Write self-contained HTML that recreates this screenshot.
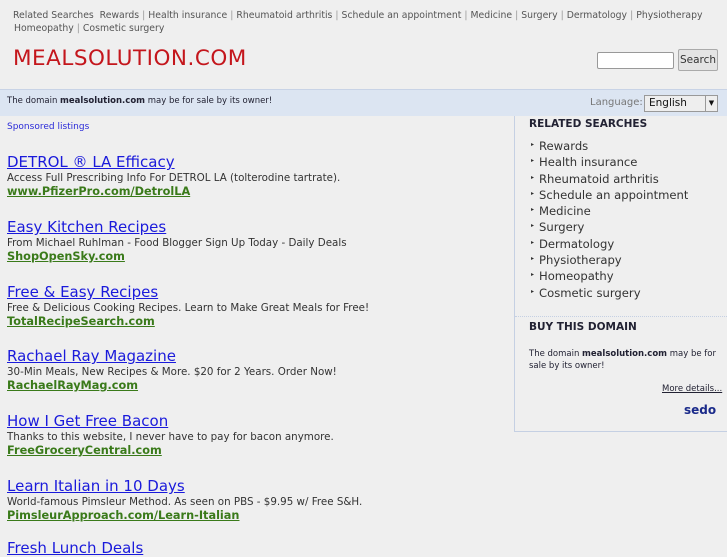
<!DOCTYPE html>
<html><head><meta charset="utf-8"><style>
*{margin:0;padding:0;box-sizing:border-box}
body{width:727px;height:545px;overflow:hidden;background:#efefef;font-family:"DejaVu Sans","Liberation Sans",sans-serif;position:relative}
.a{position:absolute;white-space:nowrap}
.top{font-size:9.3px;color:#555;left:13px}
.top span{color:#999;margin:0 3px}
.logo{left:13px;top:46px;font-size:21.5px;color:#c4161c;letter-spacing:0.5px}
.band{position:absolute;left:0;top:89px;width:727px;height:27px;background:#dce5f2;border-top:1px solid #c8d3e6}
.ad{position:absolute;left:7px;white-space:nowrap}
.ad .t{font-size:15px;color:#1a1adb;text-decoration:underline;line-height:18px}
.ad .d{font-size:10.3px;color:#333;line-height:14px}
.ad .u{font-size:11.3px;color:#3a7a1a;font-weight:bold;text-decoration:underline;line-height:14px}
.side{position:absolute;left:514px;top:116px;width:213px;height:316px;border:1px solid #c5d0e3;border-top:none;border-right:none}
.rs{font-size:11.6px;color:#333;left:531px}
.rs div{height:16.3px;line-height:16.3px;overflow:hidden}
.rs i{display:inline-block;width:8px;font-style:normal;font-size:6px;vertical-align:top;line-height:14px}
</style></head><body>
<div class="a top" style="top:10px">Related Searches&nbsp; Rewards<span>|</span>Health insurance<span>|</span>Rheumatoid arthritis<span>|</span>Schedule an appointment<span>|</span>Medicine<span>|</span>Surgery<span>|</span>Dermatology<span>|</span>Physiotherapy</div>
<div class="a top" style="top:23px;left:14px">Homeopathy<span>|</span>Cosmetic surgery</div>
<div class="a logo">MEALSOLUTION.COM</div>
<div class="a" style="left:597px;top:52px;width:77px;height:17px;background:#fff;border:1px solid #999;border-radius:2px"></div>
<div class="a" style="left:678px;top:49px;width:40px;height:22px;background:#e4e4e4;border:1px solid #aaa;border-radius:2px;font-size:10.5px;color:#333;text-align:center;line-height:20px;font-family:'DejaVu Sans',sans-serif">Search</div>
<div class="band"></div>
<div class="a" style="left:7px;top:96px;font-size:8.5px;color:#223">The domain <b>mealsolution.com</b> may be for sale by its owner!</div>
<div class="a" style="left:590px;top:97px;font-size:10px;color:#777">Language:</div>
<div class="a" style="left:644px;top:95px;width:74px;height:17px;background:#eee;border:1px solid #999;font-size:10.5px;color:#111;padding-left:4px;line-height:15px">English<span style="position:absolute;right:0;top:0;width:12px;height:15px;border-left:1px solid #999;font-size:7px;text-align:center">▼</span></div>
<div class="a" style="left:7px;top:122px;font-size:9px;color:#2a2ad8">Sponsored listings</div>
<div class="side"></div>
<div class="a" style="left:529px;top:118px;font-size:10.5px;font-weight:bold;color:#223">RELATED SEARCHES</div>
<div class="a rs" style="top:138px"><div><i>▸</i>Rewards</div><div><i>▸</i>Health insurance</div><div><i>▸</i>Rheumatoid arthritis</div><div><i>▸</i>Schedule an appointment</div><div><i>▸</i>Medicine</div><div><i>▸</i>Surgery</div><div><i>▸</i>Dermatology</div><div><i>▸</i>Physiotherapy</div><div><i>▸</i>Homeopathy</div><div><i>▸</i>Cosmetic surgery</div></div>
<div class="a" style="left:515px;top:316px;width:212px;border-top:1px dotted #c5d0e3"></div>
<div class="a" style="left:529px;top:321px;font-size:10.5px;font-weight:bold;color:#223">BUY THIS DOMAIN</div>
<div class="a" style="left:529px;top:348px;font-size:8.5px;color:#223;line-height:12px">The domain <b>mealsolution.com</b> may be for<br>sale by its owner!</div>
<div class="a" style="left:662px;top:384px;font-size:8.5px;color:#223;text-decoration:underline">More details...</div>
<div class="a" style="left:684px;top:403px;font-size:12px;font-weight:bold;color:#1a2a8a">sedo</div>
<div class="ad" style="top:153px"><div class="t">DETROL ® LA Efficacy</div><div class="d">Access Full Prescribing Info For DETROL LA (tolterodine tartrate).</div><div class="u">www.PfizerPro.com/DetrolLA</div></div>
<div class="ad" style="top:218px"><div class="t">Easy Kitchen Recipes</div><div class="d">From Michael Ruhlman - Food Blogger Sign Up Today - Daily Deals</div><div class="u">ShopOpenSky.com</div></div>
<div class="ad" style="top:283px"><div class="t">Free &amp; Easy Recipes</div><div class="d">Free &amp; Delicious Cooking Recipes. Learn to Make Great Meals for Free!</div><div class="u">TotalRecipeSearch.com</div></div>
<div class="ad" style="top:347px"><div class="t">Rachael Ray Magazine</div><div class="d">30-Min Meals, New Recipes &amp; More. $20 for 2 Years. Order Now!</div><div class="u">RachaelRayMag.com</div></div>
<div class="ad" style="top:412px"><div class="t">How I Get Free Bacon</div><div class="d">Thanks to this website, I never have to pay for bacon anymore.</div><div class="u">FreeGroceryCentral.com</div></div>
<div class="ad" style="top:477px"><div class="t">Learn Italian in 10 Days</div><div class="d">World-famous Pimsleur Method. As seen on PBS - $9.95 w/ Free S&amp;H.</div><div class="u">PimsleurApproach.com/Learn-Italian</div></div>
<div class="ad" style="top:539px"><div class="t">Fresh Lunch Deals</div></div>
</body></html>
